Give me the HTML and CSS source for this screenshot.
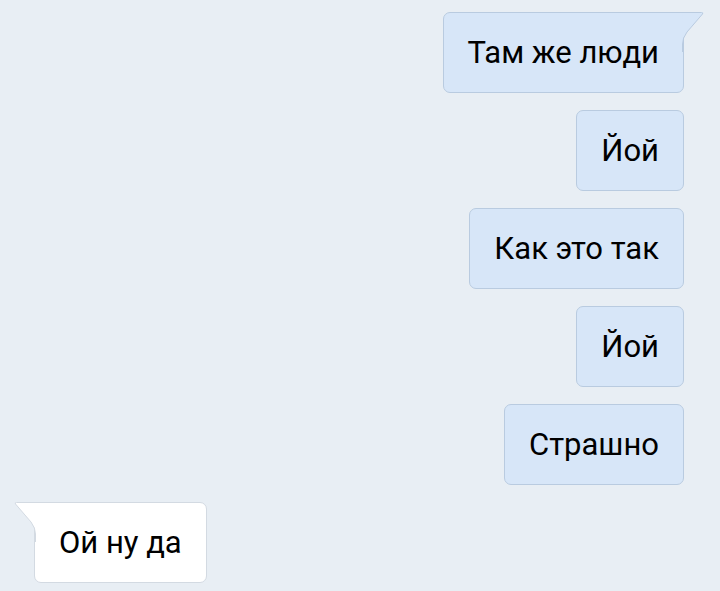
FILE: index.html
```html
<!DOCTYPE html>
<html lang="ru">
<head>
    <meta charset="UTF-8">
    <meta name="viewport" content="width=device-width, initial-scale=1.0">
    <title>Чат</title>
    <link rel="stylesheet" href="styles.css">
</head>
<body>
    <!-- Message list -->
    <div class="chat">
        <div class="msg out first">
            Там же люди
            <svg class="tail" width="24" height="40" viewBox="0 0 24 40">
                <path d="M0 0.5 H19.5 Q21.5 0.5 20.5 2 L5 20 Q0.5 26 0.5 32 V40" fill="#d7e6f8" stroke="#b9cbe0" stroke-width="1"/>
            </svg>
        </div>
        <div class="msg out">Йой</div>
        <div class="msg out">Как это так</div>
        <div class="msg out">Йой</div>
        <div class="msg out">Страшно</div>
        <div class="msg in first">
            Ой ну да
            <svg class="tail" width="24" height="40" viewBox="0 0 24 40">
                <path d="M24 0.5 H4.5 Q2.5 0.5 3.5 2 L19 20 Q23.5 26 23.5 32 V40" fill="#ffffff" stroke="#d3dae2" stroke-width="1"/>
            </svg>
        </div>
    </div>
</body>
</html>
```

FILE: styles.css
```css
/* General */
body {
    margin: 0;
    background-color: #e8eef4;
    font-family: Roboto, "Noto Sans", sans-serif;
    color: #000;
}
.chat {
    display: flex;
    flex-direction: column;
    align-items: flex-end;
    gap: 17px;
    padding: 12px 36px 0 34px;
}

/* Bubbles */
.msg {
    position: relative;
    font-size: 31px;
    line-height: 37px;
    padding: 21px 24px;
    border-radius: 7px;
}
.msg.out {
    background-color: #d7e6f8;
    border: 1px solid #b9cbe0;
}
.msg.in {
    align-self: flex-start;
    background-color: #fff;
    border: 1px solid #d3dae2;
}
.msg.out.first {
    border-top-right-radius: 0;
}
.msg.in.first {
    border-top-left-radius: 0;
}

/* Tails */
.tail {
    position: absolute;
    top: -1px;
}
.out .tail {
    left: 100%;
    margin-left: -1px;
}
.in .tail {
    right: 100%;
    margin-right: -1px;
}
```
